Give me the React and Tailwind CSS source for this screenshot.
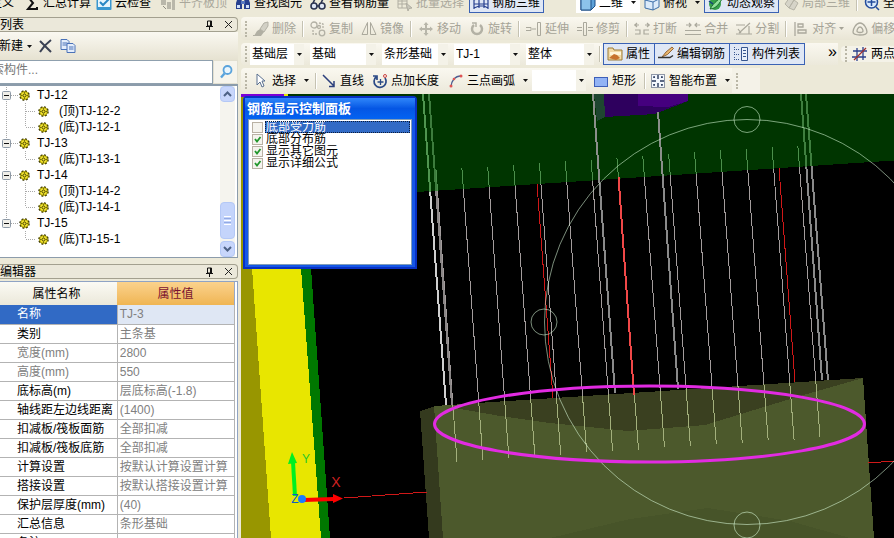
import React from "react";

const ICONS = {
  sigma: <path d="M13 2H4l5 6-5 6h9v-2M13 2v2" fill="none" stroke="#111" strokeWidth="2" />,
  cloudCheck: (
    <g>
      <rect x="0.5" y="1" width="15" height="14" rx="1" fill="#3a97d0" />
      <path d="M2 4h12v8H2z" fill="#e8f5fc" />
      <path d="M4 7l3 3 6-6" fill="none" stroke="#2a87c4" strokeWidth="2" />
    </g>
  ),
  alignTop: (
    <g fill="#b9b7aa">
      <path d="M1 2h5v8H1zM7 7h4v7H7zM12 5h3v10h-3z" />
      <path d="M3 11l3 3M2 4h3" stroke="#8f8d82" fill="none" />
    </g>
  ),
  binoculars: (
    <g>
      <path d="M3 2h3l1 5v7H1V8zM13 2h-3L9 7v7h6V8z" fill="#27408f" />
      <path d="M2 10h3v3H2zM11 10h3v3h-3z" fill="#cfe0fa" />
      <path d="M6 6h4v3H6z" fill="#5878c0" />
    </g>
  ),
  glasses: (
    <g fill="#dfe6f4" stroke="#2b3350" strokeWidth="1.6">
      <circle cx="4" cy="11" r="3" />
      <circle cx="12" cy="11" r="3" />
      <path d="M3 8l2-4M11 8l2-4M7 11h2" />
    </g>
  ),
  batch: (
    <g fill="none" stroke="#b0aea2">
      <path d="M1 2h9v11H1zM1 6h9M1 9h9M5 2v11" />
      <path d="M9 8l6 5-3 .5L11 16z" fill="#c9c7bb" />
    </g>
  ),
  rebar3d: (
    <g fill="none" stroke="#27408f" strokeWidth="1.2">
      <path d="M1 2v12M6 1v12M11 1v12M15 2v12M1 5l5-2h5l4 2M1 13l5-2h5l4 2M1 9h14" />
    </g>
  ),
  cube: (
    <g stroke="#1d4f86">
      <path d="M1 4l4-3h10v10l-4 4H1z" fill="#5ea2d8" />
      <path d="M1 4h10v11H1z" fill="#8cc3ea" />
      <path d="M11 4l4-3" />
    </g>
  ),
  cubeTop: (
    <g stroke="#3d6fa8" fill="#dcebf9">
      <path d="M1 5l6-3 8 2v8l-6 3-8-2z" />
      <path d="M1 5l8 2v8M9 7l6-3" fill="none" />
    </g>
  ),
  orbit: (
    <g>
      <circle cx="7" cy="9" r="6" fill="#35a04a" />
      <path d="M2 14C8 14 12 8 15 2c-3 1-9 5-13 12z" fill="#8fe09a" stroke="#176b2b" />
      <path d="M1 6l4 3" stroke="#17427c" strokeWidth="1.500" />
    </g>
  ),
  partial: (
    <g fill="#d6d4c8" stroke="#b5b3a6">
      <path d="M2 9l5-7 4 3-5 8zM6 13l5-8 4 3-4 7z" />
    </g>
  ),
  zoomAll: (
    <g fill="none" stroke="#234c9c" strokeWidth="1.5">
      <circle cx="7.500" cy="7" r="6" fill="#d9e9fb" />
      <path d="M7.500 3v8M3.500 7h8M12 12l3 3" />
    </g>
  ),
  erase: (
    <g>
      <path d="M15 1l-4 1-4 6 4 3 4-6z" fill="#d2d0c5" stroke="#b3b1a5" />
      <path d="M7 8l-3 2-3 5h7l3-4z" fill="#b1afa3" />
      <path d="M0 14.500h5" stroke="#b1afa3" />
    </g>
  ),
  copy: (
    <g fill="none" stroke="#b3b1a5" strokeWidth="1.300">
      <circle cx="4" cy="4" r="3" />
      <circle cx="12" cy="12" r="2.800" />
      <path d="M9 2l4 1v4M3 9v4h4" strokeDasharray="2 1" />
      <circle cx="9" cy="6" r="1.500" />
    </g>
  ),
  mirror: (
    <g fill="none" stroke="#aaa89c">
      <path d="M6.500 1.500v12H1zM9.500 1.500v12H15z" />
    </g>
  ),
  move: (
    <path
      d="M8 1L5.500 4H7v3H4V5.500L1 8l3 2.500V9h3v3H5.500L8 15l2.500-3H9V9h3v1.500L15 8l-3-2.500V7H9V4h1.500z"
      fill="#b8b6aa"
    />
  ),
  rotate: (
    <g fill="none" stroke="#b3b1a5" strokeWidth="2.500">
      <path d="M5 4a5 5 0 1 0 6 0" />
      <path d="M3 2h4v4" strokeWidth="1.500" />
    </g>
  ),
  extend: (
    <g fill="none" stroke="#aaa89c">
      <path d="M0 6.500h5v3H0M6 8h4" />
      <path d="M11.500 1.500h3v13h-3z" />
    </g>
  ),
  trim: (
    <g fill="none" stroke="#aaa89c">
      <path d="M0 6.500h5M0 9.500h5M11 6.500h5M11 9.500h5M6.500 1.500h3v13h-3z" />
    </g>
  ),
  breakIcon: (
    <g fill="none" stroke="#aaa89c" strokeWidth="1.200">
      <path d="M0 4h5M3 2L1 4l2 2M16 4h-5M13 2l2 2-2 2M1 9h5v4H1M15 9h-5v4h5" />
    </g>
  ),
  merge: (
    <g fill="none" stroke="#aaa89c" strokeWidth="1.200">
      <path d="M1 4h5M4 2l2 2-2 2M15 4h-5M12 2l-2 2 2 2M0 9.500h16M0 13.500h16" />
    </g>
  ),
  split: (
    <g fill="none" stroke="#aaa89c" strokeWidth="1.200">
      <path d="M0 4h9M0 13h16M13 5v8M3 12L14 2M2 8l3 4" />
    </g>
  ),
  alignIcon: (
    <g fill="none" stroke="#aaa89c" strokeWidth="1.300">
      <path d="M2 1v14M5 3h5v3H5zM5 9h8v3H5z" />
    </g>
  ),
  offset: (
    <g fill="none" stroke="#aaa89c" strokeWidth="1.300">
      <path d="M8 2c4 0 7 6 7 9 0 2-2 3-7 3s-7-1-7-3c0-3 3-9 7-9z" />
      <path d="M8 6c2 0 3 3 3 4s-1 1.500-3 1.500S5 11 5 10s1-4 3-4z" />
    </g>
  ),
  props: (
    <g>
      <path d="M1 2h5l1 2h8v10H1z" fill="#f3dca8" stroke="#9c7a35" />
      <path d="M3 6h11v3H3z" fill="#fff7dc" />
      <path d="M2 12l5-4 3 1 3 3-4 2z" fill="#c8742e" />
    </g>
  ),
  pen: (
    <g>
      <path d="M4 11l4-5 6-5 1.500 1.500-6 6z" fill="#e9b770" stroke="#7c4d1d" strokeWidth="0.800" />
      <path d="M0 11.500h12l3-2" stroke="#333" strokeWidth="1.500" fill="none" />
    </g>
  ),
  list: (
    <g fill="none" stroke="#37568f">
      <path d="M8.500 1.500h6v13h-6z" fill="#e9f1fc" />
      <path d="M10 4.500h3M10 7.500h3M10 10.500h3" />
      <path d="M1 3.500h5M1 8.500h5M1 13.500h5M1.500 1v4M1.500 6v4M1.500 11v4" strokeDasharray="1 1" />
    </g>
  ),
  twoPoint: (
    <g fill="none" strokeWidth="1.300">
      <path d="M1 5h14M0 11h14M5 2v13M11 1v13" stroke="#2b3f8c" />
      <path d="M2 14L14 2" stroke="#a03030" />
    </g>
  ),
  cursor: <path d="M4 1v11l3-3 2 5 2-1-2-5h3z" fill="#fff" stroke="#5a7090" />,
  line: (
    <g fill="none" stroke="#2c3f7c" strokeWidth="1.500">
      <path d="M2 2l11 11M13 8v5.500H8" />
    </g>
  ),
  pointLength: (
    <g fill="none" stroke="#2b4a86" strokeWidth="1.700">
      <path d="M4 4a6 6 0 1 0 9 1M1 3h4v4" />
      <path d="M8.500 6v6M5.500 9h6" strokeWidth="1.300" />
      <circle cx="13" cy="3" r="1.500" stroke="#c44" strokeWidth="1" />
    </g>
  ),
  arc: (
    <g fill="none">
      <path d="M3 14C3 8 7 3 13 3" stroke="#4b5f92" strokeWidth="1.300" />
      <circle cx="3" cy="13" r="1.500" fill="#d55" />
      <circle cx="6" cy="6" r="1.300" fill="#d55" />
      <circle cx="13" cy="3" r="1.500" fill="#d55" />
    </g>
  ),
  rect: <rect x="1.500" y="4.500" width="13" height="9" fill="#92b3f5" stroke="#3d5fb8" />,
  smart: (
    <g fill="none" stroke="#2a3a5c">
      <rect x="1.500" y="1.500" width="13" height="13" strokeDasharray="1 1" fill="#f3f7fd" />
      <path d="M8 2v4M8 10v4M2 8h4M10 8h4" strokeWidth="1.400" />
      <path d="M4 5V4h1M11 4h1v1M4 11v1h1M12 11v1h-1" strokeWidth="1.600" />
    </g>
  ),
  remove: <path d="M2 3l11 11M13 2C9 5 5 9 2 14" fill="none" stroke="#3b4254" strokeWidth="2" />,
  duplicate: (
    <g fill="#e4edfb" stroke="#4a72b8">
      <path d="M1 1.500h6l2 2v8H1zM2.500 5h5M2.500 7h5" />
      <path d="M7 5.500h6l2 2v7H7zM9 9h4.500M9 11h4.500" />
    </g>
  ),
  search: (
    <g fill="#e9f5fd" stroke="#5aa3dc" strokeWidth="1.800">
      <circle cx="9.500" cy="6" r="4" />
      <path d="M6.500 9.500L3 13.500" strokeWidth="2.400" />
    </g>
  ),
};

function Icon({ name }) {
  return (
    <svg viewBox="0 0 16 16" className="h-4 w-4 shrink-0" aria-hidden="true">
      {ICONS[name]}
    </svg>
  );
}

function Arrow({ dim }) {
  return (
    <svg viewBox="0 0 5 3" className="h-[3px] w-[5px] shrink-0" aria-hidden="true">
      <path d="M0 0h5L2.500 3z" fill={dim ? "#a5a397" : "#111"} />
    </svg>
  );
}

function Grip() {
  return <span className="ml-1 h-4 w-[2px] shrink-0 border-l-2 border-dotted border-[#b9b6a6]" />;
}

function Sep() {
  return <span className="mx-[2px] h-4 w-[2px] shrink-0 border-r border-white bg-[#c5c2b2]" />;
}

/* Top strip: the upper part of this toolbar is scrolled out of the window. */
function TopItem({ icon, label, dim, active, arrow, className }) {
  return (
    <button
      className={
        "flex h-[21px] shrink-0 items-center gap-[3px] whitespace-nowrap border px-[3px] " +
        (active ? "border-[#3a62b4] bg-[#dfe7f5] " : "border-transparent ") +
        (dim ? "text-[#aaa89c] " : "text-black ") +
        (className || "")
      }
    >
      {icon && <Icon name={icon} />}
      {label}
      {arrow && (
        <span className="ml-1 flex w-3 justify-center">
          <Arrow />
        </span>
      )}
    </button>
  );
}

function TopBar() {
  return (
    <header className="h-[17px] shrink-0 overflow-hidden">
      <div className="-mt-2 flex h-[21px] items-center">
        <TopItem label="定义" className="-ml-[14px] w-9" />
        <TopItem icon="sigma" label="汇总计算" className="-ml-[2px] w-[72px]" />
        <TopItem icon="cloudCheck" label="云检查" className="w-16" />
        <TopItem icon="alignTop" label="平齐板顶" dim className="w-[75px]" />
        <TopItem icon="binoculars" label="查找图元" className="w-[75px]" />
        <TopItem icon="glasses" label="查看钢筋量" className="w-[87px]" />
        <TopItem icon="batch" label="批量选择" dim className="w-[76px]" />
        <TopItem icon="rebar3d" label="钢筋三维" active className="w-[75px]" />
        <span className="w-8 shrink-0" />
        <TopItem icon="cube" label="二维" arrow className="w-16 bg-white" />
        <TopItem icon="cubeTop" label="俯视" arrow className="w-[64px]" />
        <TopItem icon="orbit" label="动态观察" active className="w-[75px]" />
        <TopItem icon="partial" label="局部三维" dim className="w-[75px]" />
        <Sep />
        <TopItem icon="zoomAll" label="全屏" />
      </div>
    </header>
  );
}

function EditItem({ icon, label, arrow }) {
  return (
    <button className="flex shrink-0 items-center gap-[3px] whitespace-nowrap px-1 text-[#a5a397]">
      <Icon name={icon} />
      {label}
      {arrow && (
        <span className="flex w-[5px] justify-center">
          <Arrow dim />
        </span>
      )}
    </button>
  );
}

function EditBar() {
  return (
    <div className="flex h-[23px] items-center overflow-hidden rounded-l bg-gradient-to-b from-[#faf8f0] to-[#e9e5d5]">
      <Grip />
      <span className="w-[2px] shrink-0" />
      <EditItem icon="erase" label="删除" />
      <Sep />
      <EditItem icon="copy" label="复制" />
      <EditItem icon="mirror" label="镜像" />
      <Sep />
      <EditItem icon="move" label="移动" />
      <EditItem icon="rotate" label="旋转" />
      <Sep />
      <EditItem icon="extend" label="延伸" />
      <EditItem icon="trim" label="修剪" />
      <Sep />
      <EditItem icon="breakIcon" label="打断" />
      <EditItem icon="merge" label="合并" />
      <EditItem icon="split" label="分割" />
      <Sep />
      <EditItem icon="alignIcon" label="对齐" arrow />
      <EditItem icon="offset" label="偏移" />
    </div>
  );
}

function Combo({ value, label, className }) {
  return (
    <span className={"flex h-[21px] shrink-0 items-center bg-white " + className}>
      <select
        aria-label={label}
        className="h-full min-w-0 flex-1 appearance-none bg-white pl-[2px] text-black outline-none"
        defaultValue={value}
      >
        <option>{value}</option>
      </select>
      <span className="flex h-full w-[10px] items-center justify-center bg-[#f4f2e8]">
        <Arrow />
      </span>
    </span>
  );
}

function PanelToggle({ icon, label }) {
  return (
    <button
      aria-pressed="true"
      className="-ml-px flex h-[22px] shrink-0 items-center gap-[3px] whitespace-nowrap border border-[#3a62b4] bg-[#dfe7f5] pl-[3px] pr-1"
    >
      <Icon name={icon} />
      {label}
    </button>
  );
}

function ContextBar() {
  return (
    <div className="flex h-[22px] items-center overflow-hidden">
      <div className="flex min-w-0 flex-1 items-center overflow-hidden rounded-l bg-gradient-to-b from-[#faf8f0] to-[#ece9db]">
        <Grip />
        <div className="ml-[3px] flex shrink-0 gap-[6px]">
          <Combo label="楼层" value="基础层" className="w-[54px]" />
          <Combo label="构件类型" value="基础" className="w-[66px]" />
          <Combo label="构件" value="条形基础" className="w-[66px]" />
          <Combo label="名称" value="TJ-1" className="w-[66px]" />
          <Combo label="单元" value="整体" className="w-[68px]" />
        </div>
        <span className="ml-[3px] flex shrink-0 items-center">
          <Sep />
        </span>
        <span className="ml-px flex shrink-0">
          <PanelToggle icon="props" label="属性" />
          <PanelToggle icon="pen" label="编辑钢筋" />
          <PanelToggle icon="list" label="构件列表" />
        </span>
        <button className="ml-auto px-px pb-1 text-base leading-4" aria-label="更多">
          »
        </button>
      </div>
      <div className="ml-[3px] flex w-[53px] shrink-0 items-center overflow-hidden rounded-l bg-[#f4f2e8]">
        <Grip />
        <button className="ml-[5px] flex shrink-0 items-center gap-[3px] whitespace-nowrap">
          <Icon name="twoPoint" />
          两点
        </button>
      </div>
    </div>
  );
}

function DrawItem({ icon, label, arrow, className }) {
  return (
    <button className={"flex shrink-0 items-center gap-[3px] whitespace-nowrap " + (className || "")}>
      <Icon name={icon} />
      {label}
      {arrow && (
        <span className="ml-[3px] flex w-2 justify-center">
          <Arrow />
        </span>
      )}
    </button>
  );
}

function DrawBar() {
  return (
    <div className="flex h-[25px] items-center overflow-hidden">
      <div className="flex h-full items-center rounded-l bg-gradient-to-b from-[#faf8f0] to-[#ece9db]">
        <Grip />
        <DrawItem icon="cursor" label="选择" arrow className="ml-[6px] w-[60px]" />
        <Sep />
        <DrawItem icon="line" label="直线" className="ml-[2px] w-[51px]" />
        <DrawItem icon="pointLength" label="点加长度" className="w-[76px]" />
        <DrawItem icon="arc" label="三点画弧" arrow className="w-[84px]" />
        <Combo label="弧半径" value="" className="w-[54px]" />
        <DrawItem icon="rect" label="矩形" className="ml-[7px] w-[49px]" />
        <Sep />
        <DrawItem icon="smart" label="智能布置" arrow className="ml-[2px] w-[82px]" />
      </div>
      <div className="flex h-full w-7 items-center bg-[#f4f2e8]">
        <Grip />
      </div>
    </div>
  );
}

function PanelTitle({ text }) {
  return (
    <div className="flex h-[15px] shrink-0 items-center rounded-r-sm border border-l-0 border-[#a3a08f] bg-[#ebe8da]">
      <h2 className="flex-1">{text}</h2>
      <button aria-label="固定" className="mr-[10px] h-[10px] w-[9px]">
        <svg viewBox="0 0 9 10" className="h-full w-full">
          <path d="M2.500 1h4v5h-4zM5.500 1v5M1 6.500h7M4.500 6.500V10" fill="none" stroke="#111" />
        </svg>
      </button>
      <button aria-label="关闭" className="mr-1 h-[9px] w-[9px]">
        <svg viewBox="0 0 9 9" className="h-full w-full">
          <path d="M1 1l7 7M8 1L1 8" fill="none" stroke="#222" />
        </svg>
      </button>
    </div>
  );
}

function Gear() {
  return (
    <svg viewBox="0 0 11 11" className="h-[11px] w-[11px] shrink-0" aria-hidden="true">
      <circle cx="5.500" cy="5.500" r="4.500" fill="#f4e52c" stroke="#3b3700" strokeWidth="1.600" strokeDasharray="1.900 1.634" />
      <circle cx="5.500" cy="5.500" r="3.900" fill="#f4e52c" stroke="#6b6400" strokeWidth="0.500" />
      <circle cx="5.500" cy="5.500" r="1.500" fill="none" stroke="#3b3700" strokeWidth="0.900" />
      <path d="M5.500 2v1.500M5.500 7.500V9M2 5.500h1.500M7.500 5.500H9" stroke="#5b5500" strokeWidth="0.800" />
    </svg>
  );
}

const TREE = [
  { name: "TJ-12", items: ["(顶)TJ-12-2", "(底)TJ-12-1"] },
  { name: "TJ-13", items: ["(底)TJ-13-1"] },
  { name: "TJ-14", items: ["(顶)TJ-14-2", "(底)TJ-14-1"] },
  { name: "TJ-15", items: ["(底)TJ-15-1"] },
];

function Tree() {
  return (
    <ul className="min-w-0 flex-1 overflow-hidden pt-px">
      {TREE.map((group, g) => {
        const lastGroup = g === TREE.length - 1;
        return (
          <li key={group.name}>
            <div className="flex h-4 items-center">
              <button aria-label={"折叠 " + group.name} className="h-4 w-[19px] shrink-0">
                <svg viewBox="0 0 19 16" className="h-full w-full">
                  <path
                    d={lastGroup ? "M6.500 0v8M11 8.500h8" : "M6.500 0v16M11 8.500h8"}
                    stroke="#a9a9a9"
                    strokeDasharray="1 1"
                    fill="none"
                  />
                  <rect x="2.500" y="4.500" width="8" height="8" rx="1" fill="#f0efe9" stroke="#8d99a6" />
                  <path d="M4 8.500h5" stroke="#111" />
                </svg>
              </button>
              <Gear />
              <span className="ml-[7px] whitespace-nowrap">{group.name}</span>
            </div>
            <ul>
              {group.items.map((item, i) => {
                const last = i === group.items.length - 1;
                return (
                  <li key={item} className="flex h-4 items-center">
                    <svg viewBox="0 0 38 16" className="h-4 w-[38px] shrink-0" aria-hidden="true">
                      {!lastGroup && <path d="M6.500 0v16" stroke="#a9a9a9" strokeDasharray="1 1" />}
                      <path
                        d={last ? "M25.500 0v8M26 8.500h10" : "M25.500 0v16M26 8.500h10"}
                        stroke="#a9a9a9"
                        strokeDasharray="1 1"
                        fill="none"
                      />
                    </svg>
                    <Gear />
                    <span className="ml-[10px] whitespace-nowrap">{item}</span>
                  </li>
                );
              })}
            </ul>
          </li>
        );
      })}
    </ul>
  );
}

function ScrollArrow({ up }) {
  return (
    <button
      aria-label={up ? "向上" : "向下"}
      className="flex h-4 w-[15px] shrink-0 items-center justify-center rounded-sm border border-[#b4c8f6] bg-[#c8d6fb]"
    >
      <svg viewBox="0 0 9 6" className="h-[6px] w-[9px]">
        <path d={up ? "M1 5l3.500-3.500L8 5" : "M1 1l3.500 3.500L8 1"} fill="none" stroke="#4d6185" strokeWidth="2" />
      </svg>
    </button>
  );
}

function ComponentPanel() {
  return (
    <section className="flex shrink-0 flex-col">
      <PanelTitle text="列表" />
      <div className="flex h-7 items-center bg-gradient-to-b from-[#faf8f1] to-[#e6e2d1]">
        <button className="-ml-px flex items-center gap-1">
          新建
          <Arrow />
        </button>
        <button aria-label="删除" className="ml-[6px]">
          <Icon name="remove" />
        </button>
        <button aria-label="复制" className="ml-[6px]">
          <Icon name="duplicate" />
        </button>
      </div>
      <div className="flex h-6 overflow-hidden">
        <input
          type="text"
          aria-label="搜索构件"
          placeholder="索构件..."
          className="-ml-[11px] min-w-0 flex-1 border border-[#8fa0ae] bg-white pl-[2px] pb-1 outline-none placeholder:text-[#777]"
        />
        <button aria-label="搜索" className="flex w-[25px] items-center justify-center border border-[#e2dfd0] bg-[#f6f4ec]">
          <Icon name="search" />
        </button>
      </div>
      <div className="flex h-[174px] border-r border-b border-t-2 border-[#8c9cab] bg-white">
        <Tree />
        <div className="mr-[2px] flex w-[15px] flex-col bg-[#f5f4ee]">
          <ScrollArrow up />
          <div className="flex-1" />
          <div className="flex h-[37px] flex-col items-center justify-center gap-px rounded-sm border border-[#b4c8f6] bg-[#c4d4fb]">
            <span className="h-px w-[7px] bg-white" />
            <span className="h-px w-[7px] bg-[#93aae4]" />
            <span className="h-px w-[7px] bg-white" />
            <span className="h-px w-[7px] bg-[#93aae4]" />
            <span className="h-px w-[7px] bg-white" />
          </div>
          <div className="h-[2px]" />
          <ScrollArrow />
        </div>
      </div>
    </section>
  );
}

const PROPS = [
  ["名称", "TJ-3"],
  ["类别", "主条基"],
  ["宽度(mm)", "2800", true],
  ["高度(mm)", "550", true],
  ["底标高(m)", "层底标高(-1.8)"],
  ["轴线距左边线距离", "(1400)"],
  ["扣减板/筏板面筋", "全部扣减"],
  ["扣减板/筏板底筋", "全部扣减"],
  ["计算设置", "按默认计算设置计算"],
  ["搭接设置", "按默认搭接设置计算"],
  ["保护层厚度(mm)", "(40)"],
  ["汇总信息", "条形基础"],
  ["备注", ""],
];

function PropertyPanel() {
  return (
    <section className="mt-[6px] flex min-h-0 flex-1 flex-col">
      <PanelTitle text="编辑器" />
      <div className="mt-[2px] min-h-0 flex-1 overflow-hidden border-r border-t border-[#8fa3c4] bg-white pr-[2px]">
        <table className="w-full table-fixed border-collapse">
          <thead>
            <tr className="h-[23px]">
              <th className="bg-gradient-to-b from-[#fbfaf4] to-[#ebe8da] p-0 pr-1 font-normal">属性名称</th>
              <th className="border-r border-[#9aa9c4] bg-gradient-to-b from-[#fbd28c] to-[#efb552] p-0 font-normal text-[#7a1230]">
                属性值
              </th>
            </tr>
          </thead>
          <tbody>
            {PROPS.map(([name, value, dim], i) => (
              <tr key={name} className="h-[19px]">
                <th
                  scope="row"
                  className={
                    "whitespace-nowrap border-b border-r border-[#b3b3b3] p-0 pl-[17px] text-left font-normal " +
                    (i === 0 ? "bg-[#316ac5] text-white" : dim ? "text-[#808080]" : "text-black")
                  }
                >
                  {name}
                </th>
                <td
                  className={
                    "whitespace-nowrap border-b border-r border-[#b3b3b3] p-0 pl-[2px] text-[#808080] " +
                    (i === 0 ? "bg-[#dfe7f4]" : "")
                  }
                >
                  {value}
                </td>
              </tr>
            ))}
          </tbody>
        </table>
      </div>
    </section>
  );
}

const DISPLAY = [
  ["底部受力筋", false],
  ["底部分布筋", true],
  ["显示其它图元", true],
  ["显示详细公式", true],
];

function DisplayDialog() {
  return (
    <div
      role="dialog"
      aria-label="钢筋显示控制面板"
      className="absolute left-[2px] top-[2px] flex h-[173px] w-[174px] flex-col rounded-t-sm border-2 border-[#0831c4] bg-[#1557e6] px-[3px] pb-[2px]"
    >
      <h2 className="-mx-[3px] flex h-[21px] items-center bg-gradient-to-b from-[#2f86fa] via-[#0556e4] to-[#0463f2] pl-[2px] text-[13px] font-bold text-white">
        钢筋显示控制面板
      </h2>
      <ul className="flex-1 border border-[#7f9db9] bg-white p-px">
        {DISPLAY.map(([name, on], i) => (
          <li key={name} className="h-3">
            <label className="flex h-3 items-center pl-[2px]">
              <span className="grid h-[11px] w-[11px] shrink-0">
                <input
                  type="checkbox"
                  defaultChecked={on}
                  className="peer col-start-1 row-start-1 h-[11px] w-[11px] appearance-none border border-[#b9b1a4] bg-[#f4f3ee]"
                />
                <svg
                  viewBox="0 0 11 11"
                  className="pointer-events-none invisible col-start-1 row-start-1 h-[11px] w-[11px] peer-checked:visible"
                >
                  <path d="M3 5l2 2.500L8.500 3" fill="none" stroke="#21962c" strokeWidth="1.800" />
                </svg>
              </span>
              <span
                className={
                  "ml-[2px] flex h-3 flex-1 items-center whitespace-nowrap pl-px leading-3 " +
                  (i === 0 ? "bg-[#316ac5] text-white outline-1 -outline-offset-1 outline-dotted outline-[#0b1c3a]" : "")
                }
              >
                {name}
              </span>
            </label>
          </li>
        ))}
      </ul>
    </div>
  );
}

const greenEdge = (x) => 192 - 0.066 * (x - 417);
const slabEdge = (x) => 406 - 0.0655 * (x - 435);

/* One vertical bar, recoloured where it crosses the green slab, the void and the footing. */
function Bar({ x1, y1, x2, y2, width = 1, colors }) {
  const at = (y) => x1 + ((x2 - x1) * (y - y1)) / (y2 - y1);
  const a = Math.max(y1, greenEdge(x1));
  const b = Math.min(y2, slabEdge(x2));
  const seg = (from, to, color) =>
    to > from ? <line x1={at(from)} y1={from} x2={at(to)} y2={to} stroke={color} strokeWidth={width} /> : null;
  return (
    <g>
      {seg(y1, a, colors[0])}
      {seg(a, b, colors[1])}
      {seg(b, y2, colors[2])}
    </g>
  );
}

const THIN = ["#4b8f4b", "#a39c9c", "#a3b07c"];
const BAR_TOPS = [170, 168, 167, 165, 163, 161, 160, 158, 156, 154, 152, 150, 149, 147, 146];
const BAR_ENDS = [462, 460, 458, 455, 455, 452, 451, 450, 447, 446, 444, 443, 440, 440, 437];

function Scene() {
  return (
    <svg
      viewBox="241 94 653 444"
      preserveAspectRatio="xMinYMin slice"
      className="block h-full w-full bg-black"
      role="img"
      aria-label="三维视图"
    >
      <g shapeRendering="crispEdges">
        <path d="M241 94H894V160.500L241 203.600z" fill="#003500" />
        <path d="M241 94h44v3h-44z" fill="#7a00d8" />
        <path d="M284 94h4v3h-4z" fill="#e8e600" />
        <path d="M241 97h11L271 538H241z" fill="#989600" />
        <path d="M252 268h49L321 538H271z" fill="#e8e600" />
        <path d="M301 268h10L330 538h-9z" fill="#007800" />
        <path d="M594 94h10l1 23-8 4z" fill="#1e4630" />
        <path d="M604 94h84v7l-33 13-50 3z" fill="#2e005e" />
        <path d="M638 94h50v7l-20 6-30-1z" fill="#45007e" />

        <path d="M420 411l15-5 9 132h-15z" fill="#343a1e" />
        <path d="M434 406L863 378 874 538H443z" fill="#4c592c" />
        <path d="M462 404L863 378 800 396 705 425 628 431 550 423 500 416 455 408z" fill="#3a4020" />
        <path d="M550 538L630 519 708 508 790 521 850 538z" fill="#475429" />

        {BAR_TOPS.map((y, i) => (
          <Bar key={i} x1={436 + 25.850 * i} y1={y} x2={457 + 25.930 * i} y2={BAR_ENDS[i]} colors={THIN} />
        ))}
        <Bar x1={423} y1={94} x2={446} y2={405} width={2} colors={["#4f954f", "#cfcfcf", "#cfcfcf"]} />
        <Bar x1={429} y1={94} x2={452} y2={405} width={2} colors={["#3d7c3d", "#8b8787", "#8b8787"]} />
        <Bar x1={593} y1={94} x2={615} y2={393} width={2} colors={["#8a8f8a", "#8a8a8a", "#8a8a8a"]} />
        <Bar x1={658} y1={112} x2={678} y2={389} width={2} colors={["#8a8f8a", "#8a8a8a", "#8a8a8a"]} />
        <Bar x1={801} y1={94} x2={822} y2={380} width={2} colors={["#3f7f3f", "#8a8a8a", "#8a8a8a"]} />
        <Bar x1={806} y1={94} x2={828} y2={380} width={2} colors={["#3f7f3f", "#8a8a8a", "#8a8a8a"]} />

        <g stroke="#d01818">
          <path d="M537 184L553 398M779 168L795 382" />
          <path d="M618.500 177L634 395" stroke="#f04848" strokeWidth="2" />
        </g>
        <path d="M344 498L427 492M868 462.500L894 461.500" stroke="#d01818" />
      </g>

      <g fill="none" stroke="#dfffdf" strokeOpacity="0.550">
        <circle cx="747" cy="322" r="202.500" />
        <circle cx="747" cy="119.500" r="13" />
        <circle cx="544" cy="322" r="13" />
        <circle cx="747" cy="525" r="13" />
      </g>

      <ellipse cx="649.500" cy="424" rx="215" ry="38" fill="none" stroke="#e22be2" strokeWidth="3" />

      <path d="M295 496L293 462" stroke="#00f020" strokeWidth="4" />
      <path d="M292 452l-4 12 9-1z" fill="#00f020" />
      <path d="M304 500l30-1" stroke="#ff0000" strokeWidth="4" />
      <path d="M333 494l10 4.500-10 4.500z" fill="#ff0000" />
      <circle cx="302" cy="499" r="4" fill="#1a7cff" />
      <g fontFamily="'Liberation Sans', sans-serif" textAnchor="middle">
        <text x="306" y="463" fontSize="12" fill="#28c828">
          Y
        </text>
        <text x="336" y="487" fontSize="14" fill="#d02020">
          X
        </text>
        <text x="295" y="503" fontSize="12" fill="#1060c0">
          Z
        </text>
      </g>
    </svg>
  );
}

export default function App() {
  return (
    <div className="flex h-screen flex-col overflow-hidden bg-[#ece9d8] font-['Liberation_Sans','Noto_Sans_CJK_SC',sans-serif] text-xs leading-4 text-black">
      <TopBar />
      <main className="flex min-h-0 flex-1">
        <aside className="flex w-[238px] shrink-0 flex-col">
          <ComponentPanel />
          <PropertyPanel />
        </aside>
        <div className="ml-[3px] flex min-w-0 flex-1 flex-col">
          <div className="flex flex-col gap-[3px] pb-px">
            <EditBar />
            <ContextBar />
            <DrawBar />
          </div>
          <div className="relative min-h-0 flex-1 overflow-hidden">
            <Scene />
            <DisplayDialog />
          </div>
        </div>
      </main>
    </div>
  );
}
